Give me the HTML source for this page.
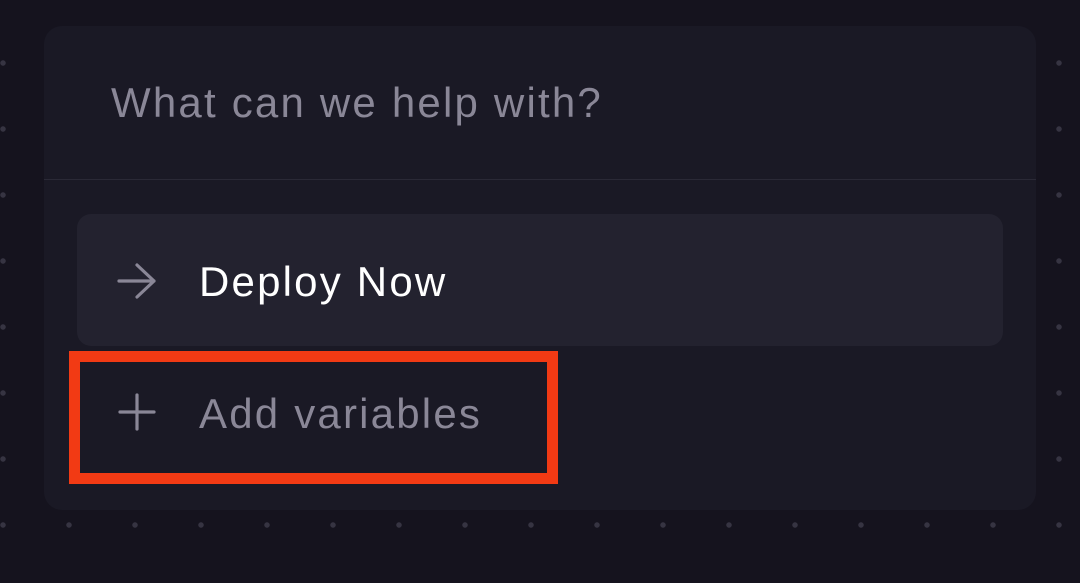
<!DOCTYPE html>
<html><head><style>
html,body{margin:0;padding:0;}
body{width:1080px;height:583px;overflow:hidden;position:relative;
background-color:#15131e;
background-image:radial-gradient(circle at 3px 3px,#363442 2.4px,transparent 3px);
background-size:66px 66px;background-position:0px 60px;
font-family:"Liberation Sans",sans-serif;}
.card{position:absolute;left:44px;top:26px;width:992px;height:484px;background:#1a1925;border-radius:18px;}
.div{position:absolute;left:0;right:0;top:153px;height:1px;background:#2a2936;}
.t{font-size:42px;letter-spacing:2.2px;}
.q{position:absolute;left:67px;top:53px;color:#8a8797;}
.dep{position:absolute;left:33px;top:188px;width:926px;height:132px;background:#23222f;border-radius:14px;}
.dep span{position:absolute;left:122px;top:44px;color:#fff;}
.add{position:absolute;left:199px;top:390px;color:#8a8797;}
.red{position:absolute;left:69px;top:351px;width:467px;height:111px;border:11px solid #f23a14;}
svg{position:absolute;}
</style></head><body>
<div class="card">
<div class="q t">What can we help with?</div>
<div class="div"></div>
<div class="dep">
<svg style="left:40px;top:48px" width="40" height="38" viewBox="0 0 40 38"><path d="M2 19H37M20 3L37 19L20 35" stroke="#8a8797" stroke-width="3.2" fill="none" stroke-linecap="round" stroke-linejoin="round"/></svg>
<span class="t">Deploy Now</span></div>
</div>
<svg style="left:117px;top:393px" width="40" height="38" viewBox="0 0 40 38"><path d="M3 19H37M20 2V36" stroke="#8a8797" stroke-width="3.2" fill="none" stroke-linecap="round"/></svg>
<div class="add t">Add variables</div>
<div class="red"></div>
</body></html>
